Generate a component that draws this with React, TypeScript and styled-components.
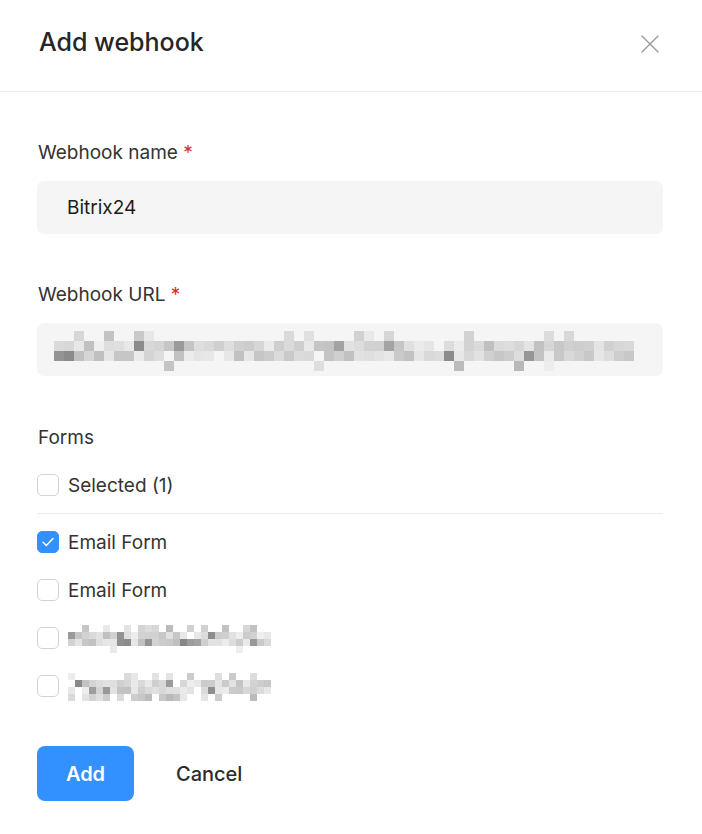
import React from 'react';
import styled, { createGlobalStyle } from 'styled-components';

const GlobalStyle = createGlobalStyle`
  html, body {
    margin: 0;
    padding: 0;
    background: #ffffff;
    font-family: Inter, 'Noto Sans', 'Liberation Sans', sans-serif;
  }
  * {
    box-sizing: border-box;
  }
`;

interface FormItem {
  id: number;
  label?: string;
  checked: boolean;
  hiddenSeed?: number;
}

const forms: FormItem[] = [
  { id: 1, label: 'Email Form', checked: true },
  { id: 2, label: 'Email Form', checked: false },
  { id: 3, checked: false, hiddenSeed: 7 },
  { id: 4, checked: false, hiddenSeed: 23 },
];

// simple seeded random so the mosaic is the same on every render
const makeRandom = (seed: number) => {
  let s = seed;
  return () => {
    s = (s * 9301 + 49297) % 233280;
    return s / 233280;
  };
};

interface MosaicProps {
  width: number;
  height: number;
  cell: number;
  seed: number;
  edge?: number;
}

const Mosaic: React.FC<MosaicProps> = ({ width, height, cell, seed, edge = 0.3 }) => {
  const rand = makeRandom(seed);
  const cols = Math.floor(width / cell);
  const rows = Math.floor(height / cell);
  const cells: React.ReactNode[] = [];
  for (let r = 0; r < rows; r++) {
    const middle = r > 0 && r < rows - 1;
    for (let c = 0; c < cols; c++) {
      const v = rand();
      const chance = middle ? 0.93 : edge;
      if (v > chance) continue;
      const g = rand();
      let shade = 185 + Math.floor(g * 55);
      if (middle && g < 0.12) shade = 135 + Math.floor(g * 250);
      cells.push(
        <rect
          key={`${r}-${c}`}
          x={c * cell}
          y={r * cell}
          width={cell}
          height={cell}
          fill={`rgb(${shade},${shade},${shade})`}
        />
      );
    }
  }
  return (
    <svg width={width} height={height} viewBox={`0 0 ${width} ${height}`}>
      {cells}
    </svg>
  );
};

const CheckIcon = () => (
  <svg width="16" height="16" viewBox="0 0 16 16" fill="none">
    <path d="M3 8.2 L6.4 11.4 L13 4.6" stroke="#ffffff" strokeWidth="1.5" strokeLinecap="round" strokeLinejoin="round" />
  </svg>
);

const CloseIcon = () => (
  <svg width="20" height="20" viewBox="0 0 20 20" fill="none">
    <path d="M2 2 L18 18 M18 2 L2 18" stroke="#9a9a9a" strokeWidth="1.4" strokeLinecap="round" />
  </svg>
);

const App: React.FC = () => {
  return (
    <>
      <GlobalStyle />
      <Modal>
        <Header>
          <Title>Add webhook</Title>
          <CloseButton aria-label="Close">
            <CloseIcon />
          </CloseButton>
        </Header>
        <Body>
          <Field>
            <Label>
              Webhook name <Required>*</Required>
            </Label>
            <InputBox>Bitrix24</InputBox>
          </Field>
          <Field>
            <Label>
              Webhook URL <Required>*</Required>
            </Label>
            <InputBox>
              <MosaicWrap>
                <Mosaic width={585} height={40} cell={10} seed={41} edge={0.2} />
              </MosaicWrap>
            </InputBox>
          </Field>
          <FormsSection>
            <Label>Forms</Label>
            <List>
              <Row>
                <Box checked={false} />
                <RowText>Selected (1)</RowText>
              </Row>
              <Divider />
              {forms.map((f) => (
                <Row key={f.id}>
                  <Box checked={f.checked}>{f.checked && <CheckIcon />}</Box>
                  {f.label ? (
                    <RowText>{f.label}</RowText>
                  ) : (
                    <HiddenName>
                      <Mosaic width={208} height={28} cell={7} seed={f.hiddenSeed ?? 1} edge={0.35} />
                    </HiddenName>
                  )}
                </Row>
              ))}
            </List>
          </FormsSection>
          <Actions>
            <PrimaryButton>Add</PrimaryButton>
            <TextButton>Cancel</TextButton>
          </Actions>
        </Body>
      </Modal>
    </>
  );
};

export default App;

const Modal = styled.div`
  width: 702px;
  min-height: 834px;
  background: #ffffff;
`;

const Header = styled.div`
  height: 92px;
  padding: 24px 42px 0 39px;
  display: flex;
  align-items: flex-start;
  justify-content: space-between;
  border-bottom: 1px solid #ececec;
`;

const Title = styled.h2`
  margin: 0;
  font-size: 25px;
  line-height: 36px;
  font-weight: 500;
  color: #262626;
`;

const CloseButton = styled.button`
  border: none;
  background: none;
  padding: 0;
  margin-top: 10px;
  width: 20px;
  height: 20px;
  cursor: pointer;
  display: flex;
`;

const Body = styled.div`
  padding: 49px 39px 0 37px;
  display: flex;
  flex-direction: column;
`;

const Field = styled.div`
  display: flex;
  flex-direction: column;
  gap: 16px;
  margin-bottom: 49px;
`;

const Label = styled.div`
  padding-left: 1px;
  font-size: 19px;
  line-height: 24px;
  color: #333333;
`;

const Required = styled.span`
  color: #e5252a;
`;

const InputBox = styled.div`
  height: 53px;
  border-radius: 7px;
  background: #f5f5f5;
  padding-left: 30px;
  display: flex;
  align-items: center;
  font-size: 19px;
  color: #1c1c1c;
`;

const MosaicWrap = styled.div`
  margin-left: -13px;
  display: flex;
  margin-top: 2px;
`;

const HiddenName = styled.span`
  display: flex;
  margin-top: 2px;
`;

const FormsSection = styled.div`
  margin-top: 1px;
  display: flex;
  flex-direction: column;
  gap: 11px;
`;

const List = styled.div`
  display: flex;
  flex-direction: column;
`;

const Row = styled.div`
  height: 48px;
  display: flex;
  align-items: center;
  gap: 9px;
`;

const Box = styled.span<{ checked: boolean }>`
  width: 22px;
  height: 22px;
  border-radius: 5px;
  display: flex;
  align-items: center;
  justify-content: center;
  background: ${(props) => (props.checked ? '#3390ff' : '#ffffff')};
  border: 1px solid ${(props) => (props.checked ? '#3390ff' : '#d2d2d2')};
`;

const RowText = styled.span`
  font-size: 19px;
  color: #333333;
`;

const Divider = styled.div`
  height: 1px;
  background: #ebebeb;
  margin: 4px 0 4px;
`;

const Actions = styled.div`
  margin-top: 36px;
  display: flex;
  align-items: center;
  gap: 18px;
`;

const PrimaryButton = styled.button`
  width: 97px;
  height: 55px;
  border: none;
  border-radius: 8px;
  background: #3390ff;
  color: #ffffff;
  font-family: inherit;
  font-size: 20px;
  font-weight: 600;
  cursor: pointer;
`;

const TextButton = styled.button`
  height: 55px;
  border: none;
  background: none;
  padding: 0 24px;
  color: #2b2b2b;
  font-family: inherit;
  font-size: 20px;
  font-weight: 500;
  cursor: pointer;
`;
